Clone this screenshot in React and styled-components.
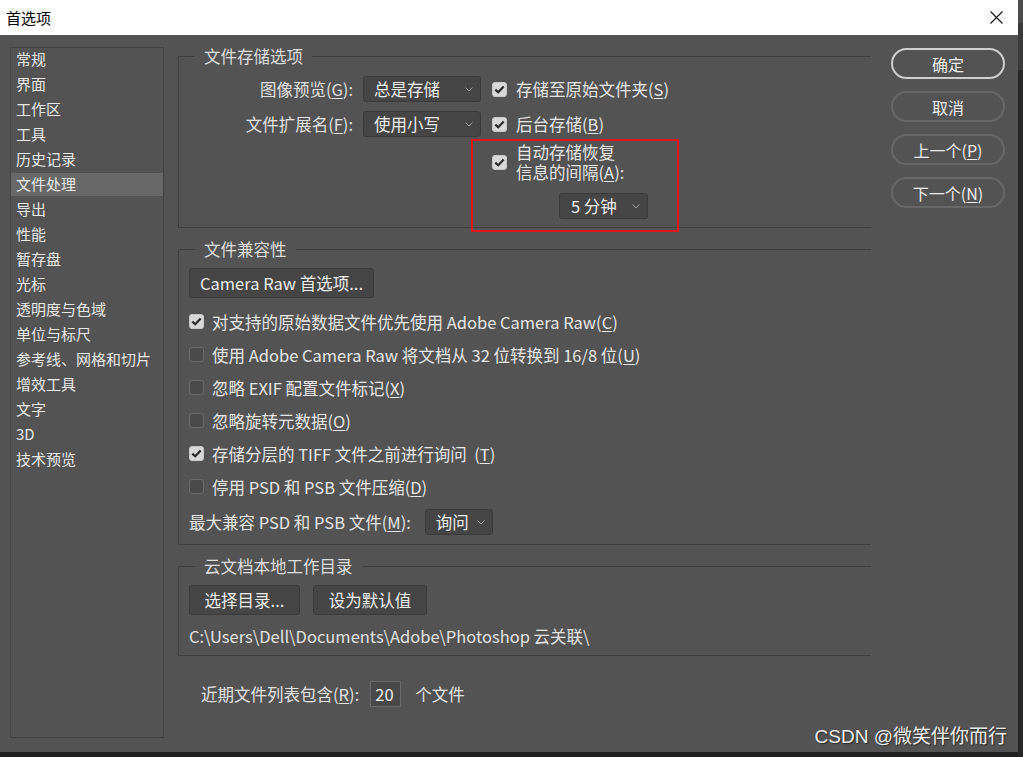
import React from "react";
import styled, { createGlobalStyle } from "styled-components";

const Global = createGlobalStyle`
  html, body { margin: 0; padding: 0; background: #262626; }
  body { font-family: "Noto Sans CJK SC", "Noto Sans", sans-serif; }
  * { box-sizing: border-box; }
  u { text-decoration-thickness: 1px; text-underline-offset: 2px; }
`;

const Screen = styled.div`
  position: relative;
  width: 1023px;
  height: 757px;
  display: flex;
  overflow: hidden;
  background: #262626;
`;

const Window = styled.div`
  width: 1018px;
  height: 757px;
  display: flex;
  flex-direction: column;
`;

const Edge = styled.div`
  width: 5px;
  height: 757px;
  background: linear-gradient(#4c4c4c 0 23px, #3a3a3a 23px 70px, #262626 70px);
`;

const TitleBar = styled.div`
  height: 35px;
  flex: none;
  background: #ffffff;
  display: flex;
  align-items: center;
  justify-content: space-between;
  padding: 0 15px 0 6px;
  color: #000;
  font-size: 15px;
`;

const Body = styled.div`
  flex: 1;
  background: #535353;
  display: flex;
  align-items: flex-start;
  padding: 11px 0 0 10px;
  color: #e4e4e4;
`;

const BottomStrip = styled.div`
  height: 5px;
  flex: none;
  background: #202020;
`;

const Sidebar = styled.ul`
  list-style: none;
  margin: 1px 0 0 0;
  padding: 0;
  width: 154px;
  height: 691px;
  border: 1px solid #424242;
  display: flex;
  flex-direction: column;
  gap: 2px;
`;

const NavItem = styled.li`
  height: 23px;
  line-height: 22px;
  padding-left: 5px;
  font-size: 15px;
  color: #e8e8e8;
  background: ${(p) => (p.$active ? "#686868" : "transparent")};
`;

const Main = styled.div`
  width: 693px;
  margin-left: 14px;
  display: flex;
  flex-direction: column;
  gap: 11px;
  font-size: 16.5px;
`;

const Group = styled.fieldset`
  position: relative;
  margin: 0;
  padding: ${(p) => p.$pad || "10px 10px 8px 10px"};
  border: 1px solid #3e3e3e;
  border-right: none;
  min-width: 0;
`;

const Legend = styled.legend`
  margin-left: 6px;
  padding: 0 9px;
  line-height: 20px;
  font-size: 16.5px;
  color: #dddddd;
`;

const StorageLayout = styled.div`
  display: flex;
  align-items: flex-start;
`;

const FormCol = styled.div`
  display: flex;
  flex-direction: column;
  gap: 9px;
`;

const FormRow = styled.div`
  display: flex;
  align-items: center;
  height: 26px;
  gap: 10px;
`;

const FieldLabel = styled.span`
  width: ${(p) => p.$w || 164}px;
  text-align: right;
  white-space: nowrap;
  color: #e0e0e0;
`;

const CheckCol = styled.div`
  margin-left: 11px;
  display: flex;
  flex-direction: column;
`;

const CheckRow = styled.label`
  display: flex;
  align-items: center;
  gap: ${(p) => p.$gap || 8}px;
  height: ${(p) => p.$h || 33}px;
  margin-top: ${(p) => p.$mt || 0}px;
  white-space: nowrap;
  color: #e6e6e6;
`;

const Box = styled.span`
  flex: none;
  width: 15px;
  height: 15px;
  border-radius: 3px;
  display: flex;
  align-items: center;
  justify-content: center;
  background: ${(p) => (p.$checked ? "#d8d8d8" : "#4a4a4a")};
  border: 1px solid ${(p) => (p.$checked ? "#c8c8c8" : "#6b6b6b")};
`;

const AutoSave = styled.div`
  position: relative;
  margin-top: 5px;
  display: flex;
  flex-direction: column;
`;

const AutoTop = styled.div`
  display: flex;
  align-items: center;
  gap: 9px;
`;

const TwoLine = styled.span`
  display: flex;
  flex-direction: column;
  color: #e6e6e6;
`;

const Line = styled.span`
  height: 20px;
  line-height: 20px;
  white-space: nowrap;
`;

const RedMark = styled.div`
  position: absolute;
  left: -21px;
  top: -3px;
  width: 208px;
  height: 93px;
  border: 2px solid #e5141c;
  pointer-events: none;
`;

const SelectBox = styled.div`
  width: ${(p) => p.$w}px;
  height: 26px;
  flex: none;
  margin-left: ${(p) => p.$ml || 0}px;
  margin-top: ${(p) => p.$mt || 0}px;
  padding: 0 7px 0 ${(p) => p.$pl || 10}px;
  display: flex;
  align-items: center;
  justify-content: space-between;
  background: #454545;
  border: 1px solid #3a3a3a;
  border-radius: 3px;
  color: #ececec;
  white-space: nowrap;
`;

const Button = styled.button`
  width: ${(p) => p.$w}px;
  height: 30px;
  padding: 0;
  background: #454545;
  border: 1px solid #3a3a3a;
  border-radius: 3px;
  color: #ececec;
  font-family: inherit;
  font-size: 16.5px;
  white-space: nowrap;
`;

const ButtonRow = styled.div`
  display: flex;
  gap: 13px;
`;

const PathText = styled.div`
  margin-top: 11px;
  line-height: 20px;
  color: #e2e2e2;
  white-space: nowrap;
`;

const RecentRow = styled.div`
  margin-top: 14px;
  margin-left: 23px;
  display: flex;
  align-items: center;
  color: #e2e2e2;
`;

const NumberInput = styled.div`
  width: 31px;
  height: 26px;
  margin: 0 14px 0 11px;
  border: 1px solid #6a6a6a;
  background: #484848;
  color: #f2f2f2;
  display: flex;
  align-items: center;
  padding-left: 4px;
`;

const ActionCol = styled.div`
  margin: 2px 0 0 20px;
  width: 114px;
  display: flex;
  flex-direction: column;
  gap: 12px;
`;

const Pill = styled.button`
  height: 31px;
  width: 114px;
  border-radius: 16px;
  background: transparent;
  border: ${(p) => (p.$primary ? "2px solid #cfcfcf" : "2px solid #676767")};
  color: #ececec;
  font-family: inherit;
  font-size: 16px;
  padding: 0;
`;

const Watermark = styled.div`
  position: absolute;
  right: 16px;
  top: 726px;
  font-family: "Liberation Sans", "Noto Sans CJK SC", sans-serif;
  font-size: 19px;
  line-height: 22px;
  color: #eeeeee;
  text-shadow: 1px 1px 1px #2a2a2a;
  white-space: nowrap;
`;

const Chevron = () => (
  <svg width="8" height="5" viewBox="0 0 8 5">
    <path d="M0.5 0.5 L4 4 L7.5 0.5" fill="none" stroke="#a0a0a0" strokeWidth="1" />
  </svg>
);

const CloseIcon = () => (
  <svg width="13" height="13" viewBox="0 0 13 13">
    <path d="M0.5 0.5 L12.5 12.5 M12.5 0.5 L0.5 12.5" stroke="#111" strokeWidth="1.1" />
  </svg>
);

const Check = ({ checked }) => (
  <Box $checked={checked}>
    {checked && (
      <svg width="11" height="9" viewBox="0 0 11 9">
        <path d="M1.3 4.6 L4.2 7.3 L9.7 1.4" fill="none" stroke="#2b2b2b" strokeWidth="2.2" />
      </svg>
    )}
  </Box>
);

const Select = ({ value, w, ml, mt, pl }) => (
  <SelectBox $w={w} $ml={ml} $mt={mt} $pl={pl}>
    <span>{value}</span>
    <Chevron />
  </SelectBox>
);

const navItems = [
  "常规", "界面", "工作区", "工具", "历史记录", "文件处理", "导出", "性能", "暂存盘",
  "光标", "透明度与色域", "单位与标尺", "参考线、网格和切片", "增效工具", "文字", "3D", "技术预览",
];

const compat = [
  { checked: true, text: <>对支持的原始数据文件优先使用 Adobe Camera Raw(<u>C</u>)</> },
  { checked: false, text: <>使用 Adobe Camera Raw 将文档从 32 位转换到 16/8 位(<u>U</u>)</> },
  { checked: false, text: <>忽略 EXIF 配置文件标记(<u>X</u>)</> },
  { checked: false, text: <>忽略旋转元数据(<u>O</u>)</> },
  { checked: true, text: <>存储分层的 TIFF 文件之前进行询问 &nbsp;(<u>T</u>)</> },
  { checked: false, text: <>停用 PSD 和 PSB 文件压缩(<u>D</u>)</> },
];

export default function App() {
  return (
    <Screen>
      <Global />
      <Window>
        <TitleBar>
          <span>首选项</span>
          <CloseIcon />
        </TitleBar>
        <Body>
          <Sidebar>
            {navItems.map((n) => (
              <NavItem key={n} $active={n === "文件处理"}>{n}</NavItem>
            ))}
          </Sidebar>

          <Main>
            <Group>
              <Legend>文件存储选项</Legend>
              <StorageLayout>
                <FormCol>
                  <FormRow>
                    <FieldLabel>图像预览(<u>G</u>):</FieldLabel>
                    <Select value="总是存储" w={118} />
                  </FormRow>
                  <FormRow>
                    <FieldLabel>文件扩展名(<u>F</u>):</FieldLabel>
                    <Select value="使用小写" w={118} />
                  </FormRow>
                </FormCol>
                <CheckCol>
                  <CheckRow $h={26} $gap={9}>
                    <Check checked />
                    <span>存储至原始文件夹(<u>S</u>)</span>
                  </CheckRow>
                  <CheckRow $h={26} $gap={9} $mt={9}>
                    <Check checked />
                    <span>后台存储(<u>B</u>)</span>
                  </CheckRow>
                  <AutoSave>
                    <AutoTop>
                      <Check checked />
                      <TwoLine>
                        <Line>自动存储恢复</Line>
                        <Line>信息的间隔(<u>A</u>):</Line>
                      </TwoLine>
                    </AutoTop>
                    <Select value="5 分钟" w={89} ml={67} mt={11} pl={11} />
                    <RedMark />
                  </AutoSave>
                </CheckCol>
              </StorageLayout>
            </Group>

            <Group $pad="9px 10px 9px 10px">
              <Legend>文件兼容性</Legend>
              <Button $w={185}>Camera Raw 首选项...</Button>
              {compat.map((c, i) => (
                <CheckRow key={i} $mt={i === 0 ? 7 : 0}>
                  <Check checked={c.checked} />
                  <span>{c.text}</span>
                </CheckRow>
              ))}
              <FormRow style={{ marginTop: 6 }}>
                <span>最大兼容 PSD 和 PSB 文件(<u>M</u>):</span>
                <Select value="询问" w={68} ml={4} />
              </FormRow>
            </Group>

            <Group $pad="9px 10px 9px 10px">
              <Legend>云文档本地工作目录</Legend>
              <ButtonRow>
                <Button $w={111}>选择目录...</Button>
                <Button $w={114}>设为默认值</Button>
              </ButtonRow>
              <PathText>{"C:\\Users\\Dell\\Documents\\Adobe\\Photoshop 云关联\\"}</PathText>
            </Group>

            <RecentRow>
              <span>近期文件列表包含(<u>R</u>):</span>
              <NumberInput>20</NumberInput>
              <span>个文件</span>
            </RecentRow>
          </Main>

          <ActionCol>
            <Pill $primary>确定</Pill>
            <Pill>取消</Pill>
            <Pill>上一个(<u>P</u>)</Pill>
            <Pill>下一个(<u>N</u>)</Pill>
          </ActionCol>
        </Body>
        <BottomStrip />
      </Window>
      <Edge />
      <Watermark>CSDN @微笑伴你而行</Watermark>
    </Screen>
  );
}
